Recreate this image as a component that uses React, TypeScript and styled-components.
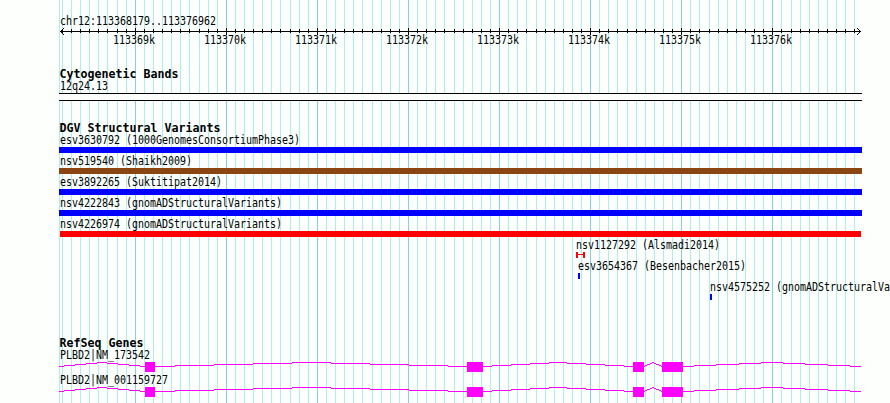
import styled, { createGlobalStyle } from 'styled-components';

const LEFT = 59;
const WIDTH = 803;
const GRID_ORIGIN = 135.26;
const GRID_STEP = 9.108;
const FIRST_TICK = -8;
const LAST_TICK = 79;

type Variant = {
    name: string;
    color: string;
    start: number;
    width: number;
    capped?: boolean;
};

const variants: Variant[] = [
    { name: 'esv3630792 (1000GenomesConsortiumPhase3)', color: '#0000ff', start: 0, width: 803 },
    { name: 'nsv519540 (Shaikh2009)', color: '#8b4513', start: 0, width: 803 },
    { name: 'esv3892265 (Suktitipat2014)', color: '#0000ff', start: 0, width: 803 },
    { name: 'nsv4222843 (gnomADStructuralVariants)', color: '#0000ff', start: 0, width: 803 },
    { name: 'nsv4226974 (gnomADStructuralVariants)', color: '#ff0000', start: 1, width: 801 },
    { name: 'nsv1127292 (Alsmadi2014)', color: '#ff0000', start: 517, width: 9, capped: true },
    { name: 'esv3654367 (Besenbacher2015)', color: '#0000ff', start: 519, width: 2 },
    { name: 'nsv4575252 (gnomADStructuralVa', color: '#0000ff', start: 651, width: 2 },
];

const genes = ['PLBD2|NM_173542', 'PLBD2|NM_001159727'];
const exons = [[86, 10], [408, 16], [574, 11], [603, 21]];
const introns = [[0, 86], [96, 408], [424, 574], [585, 603], [624, 802]];
const labels = [369, 370, 371, 372, 373, 374, 375, 376];

const ticks = Array.from({ length: LAST_TICK - FIRST_TICK + 1 }, (_, i) => {
    const k = FIRST_TICK + i;
    return { x: Math.floor(GRID_ORIGIN + k * GRID_STEP), major: k % 10 === 0 };
});

// One pixel high steps climbing to the middle of the intron and back down
function intronSteps(from: number, to: number) {
    const step = (to - from) / 8;
    return Array.from({ length: 9 }, (_, i) => {
        const x = i === 0 ? from : Math.round(from + (i - 0.5) * step);
        const end = i === 8 ? to : Math.round(from + (i + 0.5) * step);
        return { x, y: Math.abs(4 - i), width: end - x };
    });
}

function App() {
    return (
        <>
            <GlobalStyle/>
            <Browser>
                <Grid>
                    <rect x={LEFT} width={1} height={403} fill="#afeeee"/>
                    {ticks.map(({ x, major }) => (
                        <rect key={x} x={x} width={1} height={403} fill={major ? '#87ceeb' : '#afeeee'}/>
                    ))}
                </Grid>
                <Overview>
                    <Label>chr12:113368179..113376962</Label>
                    <Scale/>
                    <ScaleLabels>
                        {labels.map((n) => <Label key={n} $indent={0}>113{n}k</Label>)}
                    </ScaleLabels>
                </Overview>
                <Track $height={54}>
                    <Title>Cytogenetic Bands</Title>
                    <Label>12q24.13</Label>
                    <Band/>
                </Track>
                <Track $height={215}>
                    <Title>DGV Structural Variants</Title>
                    {variants.map((v) => (
                        <Feature key={v.name} $start={v.start}>
                            <Label $indent={v.start ? 0 : 1}>{v.name}</Label>
                            {v.capped
                                ? <CappedBar $color={v.color} $width={v.width}/>
                                : <Bar $color={v.color} $width={v.width}/>}
                        </Feature>
                    ))}
                </Track>
                <Track $height={66}>
                    <Title>RefSeq Genes</Title>
                    {genes.map((name) => (
                        <Gene key={name}>
                            <Label>{name}</Label>
                            <Transcript/>
                        </Gene>
                    ))}
                </Track>
            </Browser>
        </>
    );
}

export default App;

function Scale() {
    return (
        <Drawing width={WIDTH} height={7}>
            <rect x={1} y={3} width={801} height={1}/>
            {ticks.map(({ x, major }) => (
                <rect key={x} x={x - LEFT} y={major ? 0 : 1} width={1} height={major ? 7 : 4}/>
            ))}
            {[0, 1, 2, 3].map((i) => (
                <g key={i}>
                    <rect x={1 + i} y={3 - i} width={1} height={1}/>
                    <rect x={1 + i} y={3 + i} width={1} height={1}/>
                    <rect x={801 - i} y={3 - i} width={1} height={1}/>
                    <rect x={801 - i} y={3 + i} width={1} height={1}/>
                </g>
            ))}
        </Drawing>
    );
}

function Transcript() {
    return (
        <Drawing width={WIDTH} height={10} fill="#ff00ff">
            {introns.map(([from, to]) => intronSteps(from, to).map((s) => (
                <rect key={s.x} x={s.x} y={s.y} width={s.width} height={1}/>
            )))}
            {exons.map(([x, width]) => (
                <rect key={x} x={x} width={width} height={10}/>
            ))}
        </Drawing>
    );
}

const GlobalStyle = createGlobalStyle`
  body {
    margin: 0;
    background: #fdfffc;
  }
`;

const Browser = styled.main`
  position: relative;
  box-sizing: border-box;
  width: 890px;
  height: 403px;
  padding: 16px 0 0 ${LEFT}px;
  overflow: hidden;
  color: #000;
  font-family: 'DejaVu Sans Mono', 'Liberation Mono', monospace;
`;

const Grid = styled.svg`
  position: absolute;
  top: 0;
  left: 0;
  z-index: -1;
  width: 890px;
  height: 403px;
  shape-rendering: crispEdges;
`;

const Overview = styled.header`
  height: 52px;
`;

const Drawing = styled.svg`
  display: block;
  shape-rendering: crispEdges;
`;

const Label = styled.div<{ $indent?: number }>`
  box-sizing: border-box;
  height: 12px;
  padding-left: ${(props) => props.$indent ?? 1}px;
  font-size: 10px;
  line-height: 12px;
  letter-spacing: -0.02px;
  white-space: pre;
  transform: scaleY(1.14);
`;

const ScaleLabels = styled.div`
  display: flex;
  gap: 49px;
  padding-left: 54px;

  ${Label} {
    width: 42px;
  }
`;

const Track = styled.section<{ $height: number }>`
  height: ${(props) => props.$height}px;
`;

const Title = styled.h2`
  height: 13px;
  margin: 0;
  padding-left: 0.5px;
  font-size: 11.63px;
  font-weight: bold;
  line-height: 13px;
  white-space: pre;
`;

const Band = styled.div`
  box-sizing: border-box;
  width: ${WIDTH}px;
  height: 8px;
  border: solid #000;
  border-width: 1px 0;
  background: #fdfffc;
`;

const Feature = styled.div<{ $start: number }>`
  height: 21px;
  margin-left: ${(props) => props.$start}px;
`;

const Bar = styled.div<{ $color: string; $width: number }>`
  width: ${(props) => props.$width}px;
  height: 6px;
  background: ${(props) => props.$color};
`;

const CappedBar = styled.div<{ $color: string; $width: number }>`
  display: flex;
  align-items: center;
  box-sizing: border-box;
  width: ${(props) => props.$width}px;
  height: 6px;
  border: solid ${(props) => props.$color};
  border-width: 0 2px;

  &::before {
    content: '';
    width: 100%;
    height: 1px;
    margin-bottom: 1px;
    background: ${(props) => props.$color};
  }
`;

const Gene = styled.div`
  height: 25px;
`;
